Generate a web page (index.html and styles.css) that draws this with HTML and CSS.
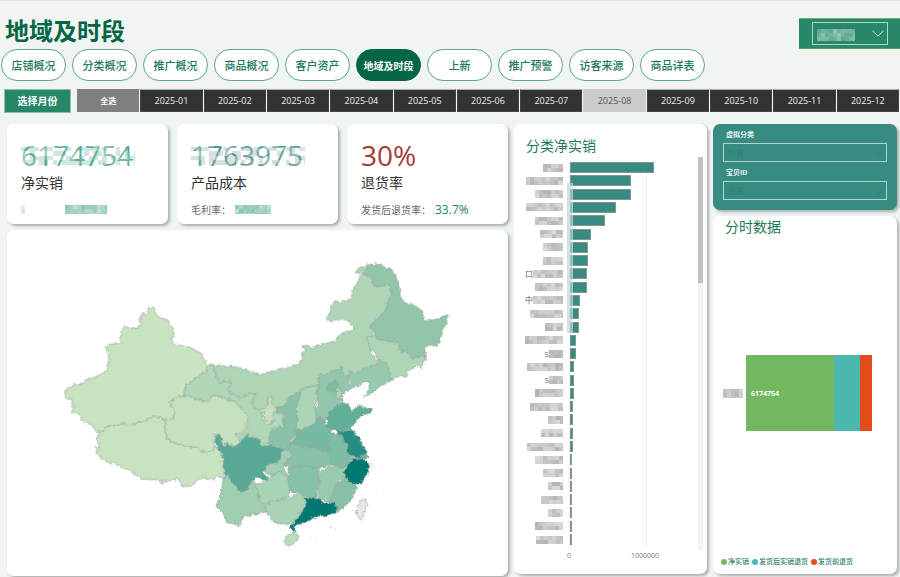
FILE: index.html
```html
<!DOCTYPE html>
<html lang="zh-CN">
<head>
<meta charset="utf-8">
<meta name="viewport" content="width=device-width, initial-scale=1">
<title>地域及时段</title>
<link rel="stylesheet" href="styles.css">
</head>
<body>
<header class="header">
  <h1 class="title">地域及时段</h1>
  <div class="shop">
    <div class="select-wrap shop-box">
      <select class="select" aria-label="店铺"><option></option></select>
      <span class="mask shop-mask" data-width="38" data-height="12" data-tone="light"></span>
      <svg class="chevron" viewBox="0 0 12 7"><path d="M.5 .7 6 6.2 11.5 .7"/></svg>
    </div>
  </div>
</header>

<nav class="tabs">
  <a class="tab" href="#">店铺概况</a>
  <a class="tab" href="#">分类概况</a>
  <a class="tab" href="#">推广概况</a>
  <a class="tab" href="#">商品概况</a>
  <a class="tab" href="#">客户资产</a>
  <a class="tab active" href="#">地域及时段</a>
  <a class="tab" href="#">上新</a>
  <a class="tab" href="#">推广预警</a>
  <a class="tab" href="#">访客来源</a>
  <a class="tab" href="#">商品详表</a>
</nav>

<section class="months">
  <div class="months-label">选择月份</div>
  <div class="months-list">
    <button class="month all">全选</button>
    <button class="month">2025-01</button>
    <button class="month">2025-02</button>
    <button class="month">2025-03</button>
    <button class="month">2025-04</button>
    <button class="month">2025-05</button>
    <button class="month">2025-06</button>
    <button class="month">2025-07</button>
    <button class="month selected">2025-08</button>
    <button class="month">2025-09</button>
    <button class="month">2025-10</button>
    <button class="month">2025-11</button>
    <button class="month">2025-12</button>
  </div>
</section>

<main class="board">
  <div class="left">
    <div class="kpis">
      <article class="card kpi">
        <div class="figure green">6174754<span class="mask figure-mask" data-width="114" data-height="26" data-tone="green"></span></div>
        <div class="kpi-name">净实销</div>
        <div class="kpi-note"><span class="mask" data-width="4" data-height="9" data-tone="pale"></span><span class="mask note-mask" data-width="42" data-height="9" data-tone="green"></span></div>
      </article>
      <article class="card kpi">
        <div class="figure teal">1763975<span class="mask figure-mask" data-width="114" data-height="26" data-tone="teal"></span></div>
        <div class="kpi-name">产品成本</div>
        <div class="kpi-note">毛利率：<span class="mask rate-mask" data-width="36" data-height="9" data-tone="green"></span></div>
      </article>
      <article class="card kpi">
        <div class="figure red">30%</div>
        <div class="kpi-name">退货率</div>
        <div class="kpi-note">发货后退货率：<strong class="rate">33.7%</strong></div>
      </article>
    </div>

    <section class="card map-card">
      <svg class="map" viewBox="180 780 1180 870" role="img" aria-label="各省净实销">
        <defs>
          <filter id="coast" x="-5%" y="-5%" width="110%" height="110%" color-interpolation-filters="sRGB">
            <feTurbulence type="fractalNoise" baseFrequency="0.09" numOctaves="2" seed="4" result="n"/>
            <feDisplacementMap in="SourceGraphic" in2="n" scale="15" xChannelSelector="R" yChannelSelector="G"/>
          </filter>
        </defs>
        <g class="provinces" filter="url(#coast)">
          <g transform="translate(600 1050)">
            <path fill="#add5b6" d="M37,45 80,48 120,52 145,62 180,73 205,70 235,58 270,52 300,40 312,22 305,10 315,0 308,-12 320,-14 345,-6 365,-18 400,-25 425,-48 465,-60 450,-85 430,-93 410,-90 385,-88 382,-97 395,-125 405,-147 420,-140 455,-155 460,-180 480,-215 482,-230 467,-232 475,-245 495,-252 510,-245 520,-220 530,-190 570,-198 580,-180 565,-160 560,-120 540,-100 515,-75 520,-45 500,-35 510,0 530,30 535,42 500,60 465,75 445,90 433,110 420,80 400,100 360,110 330,130 310,135 295,140 265,170 235,190 215,180 200,190 165,182 130,165 80,130 40,90Z"/>
            <path fill="#afd7b8" d="M23,47 37,45 45,60 50,80 60,98 90,93 95,105 80,118 95,130 120,145 150,130 168,132 155,160 165,175 185,183 190,205 200,225 220,215 215,195 228,185 250,200 250,232 215,235 210,255 200,283 185,292 165,280 150,255 140,253 132,268 115,265 105,250 130,250 143,225 145,205 120,170 100,155 60,140 35,140 20,158 -10,148 -52,138 -47,125 -42,104 -18,87 17,66Z"/>
          </g>
          <g transform="translate(150 750)">
            <path fill="#c8e3c0" d="M293,174 311,174 315,186 328,200 340,207 356,212 362,228 372,240 370,262 365,275 372,284 400,288 418,290 440,303 455,310 462,330 473,347 467,366 450,374 432,387 420,400 408,404 403,425 398,438 378,444 357,456 368,472 377,486 370,500 374,509 345,508 322,500 300,505 285,512 270,518 255,522 235,526 215,519 203,528 185,527 170,530 160,545 138,547 127,525 110,517 96,510 88,492 64,486 70,480 67,450 48,446 44,430 52,415 75,402 85,405 97,402 105,391 130,385 168,365 172,345 178,328 172,296 165,289 185,282 213,280 208,268 213,250 222,229 240,235 268,234 271,212 270,197 290,190Z"/>
            <path fill="#c8e3c0" d="M147,547 160,545 170,530 185,527 203,528 215,519 235,526 270,518 300,505 322,500 345,508 346,545 355,570 380,583 440,592 455,604 470,607 490,602 495,590 508,595 520,620 522,660 520,684 497,680 490,692 463,682 440,693 425,708 397,712 392,700 382,688 352,694 338,690 334,703 328,690 280,688 240,665 192,638 185,643 150,624 137,600 137,590 150,592 140,565Z"/>
            <path fill="#c5e1be" d="M357,456 378,444 398,438 420,440 440,448 470,458 480,452 487,436 510,440 550,455 570,470 588,488 595,508 585,535 576,548 556,550 560,565 580,570 568,575 562,588 525,582 515,570 507,555 495,557 492,587 495,595 490,602 470,607 455,604 440,592 380,583 355,570 346,545 345,508 374,509 370,500 377,486 368,472Z"/>
          </g>
          <g transform="translate(900 750)">
            <path fill="#91c6ab" d="M200,45 230,41 250,50 275,55 288,75 300,120 312,158 345,165 368,182 372,212 400,213 425,200 450,194 440,207 443,220 430,235 425,262 412,287 390,285 375,292 378,328 365,318 335,325 320,302 305,310 295,280 270,275 235,268 225,250 212,228 240,200 262,175 265,150 278,120 265,103 250,110 222,108 215,80 192,75 200,60Z"/>
            <path fill="#add5b6" d="M200,262 225,255 235,268 270,275 295,280 305,310 320,302 335,325 365,318 378,328 372,340 362,355 355,345 335,358 320,365 320,380 295,378 275,390 270,370 258,340 235,330 225,305 208,300 205,280Z"/>
            <path fill="#96c9ad" d="M150,360 165,375 190,358 235,342 235,330 258,340 270,370 275,392 245,408 225,425 200,437 188,442 205,420 207,400 190,396 175,410 162,412 155,400 148,385Z"/>
          </g>
          <g transform="translate(600 1050)">
            <path fill="#fff" stroke="none" d="M465,116 480,112 492,97 506,101 506,120 492,140 482,170 455,182 445,162 430,155 427,138 440,126Z"/>
            <path fill="#93c7ac" d="M360,70 380,75 400,65 425,50 433,75 445,80 450,100 462,112 440,125 425,135 430,155 415,160 395,180 378,205 350,203 345,180 355,160 352,145 348,130 358,110 355,90Z"/>
            <path fill="#7dbca4" d="M385,105 402,92 418,100 412,120 395,128 382,118Z"/>
            <path fill="#b2d9b9" d="M410,120 418,112 425,130 422,148 408,145Z"/>
            <path fill="#acd5b7" d="M300,125 320,112 355,105 358,112 348,130 352,145 345,170 348,200 340,225 305,240 287,242 292,210 288,175 297,150Z"/>
            <path fill="#88c1a7" d="M298,127 300,140 290,170 292,210 287,242 288,258 268,275 272,298 250,300 235,290 205,280 212,240 230,235 250,230 252,200 232,182 228,172 250,170 262,155 270,140 285,130Z"/>
            <path fill="#c5e1be" d="M215,135 220,150 215,165 230,170 228,185 215,195 220,215 205,223 195,210 192,190 180,178 200,175 205,145Z"/>
            <path fill="#9fceb0" d="M72,380 85,375 95,395 112,415 125,428 143,420 150,400 165,395 175,430 178,450 195,465 205,485 160,495 125,505 120,528 100,522 80,520 75,495 48,470 60,445 65,420Z"/>
            <path fill="#a2cfb2" d="M250,300 270,302 280,315 262,330 250,350 255,362 265,380 235,368 215,378 195,368 200,345 230,340Z"/>
            <path fill="#a9d3b5" d="M162,405 200,395 215,378 238,365 262,380 270,400 268,425 270,440 240,450 215,455 195,465 178,450 175,425Z"/>
            <path fill="#58a996" d="M43,260 52,253 65,265 70,290 80,280 90,287 110,288 118,278 130,265 145,253 150,262 175,265 185,290 215,285 250,300 240,325 230,340 200,345 190,370 208,388 190,392 170,380 150,400 143,420 125,428 112,415 95,395 85,375 75,382 70,320 48,285Z"/>
            <path fill="#a8d3b4" d="M195,470 215,455 240,450 270,445 300,430 312,440 315,460 305,490 285,517 265,524 225,520 205,495 200,480Z"/>
            <path fill="#89c2a8" d="M270,278 288,275 300,288 345,295 375,310 392,325 390,348 365,352 355,358 330,350 295,348 270,352 252,348 262,330 280,315 268,300Z"/>
            <path fill="#78b9a2" d="M287,243 320,235 345,220 350,203 378,208 372,235 395,240 402,255 385,275 392,295 378,310 345,295 300,288 270,278 288,262Z"/>
            <path fill="#61ae99" d="M378,205 395,178 418,162 440,158 450,168 455,185 475,168 500,175 515,178 515,188 490,195 470,215 450,235 430,245 400,240 372,232 385,215Z"/>
            <path fill="#7ebca5" d="M402,255 425,250 430,270 445,285 440,310 455,320 462,325 450,345 430,355 392,345 392,325 378,308 388,290 382,275 395,262Z"/>
            <path fill="#268e80" d="M400,238 430,247 452,235 465,248 480,265 490,290 503,305 502,320 480,327 455,318 440,310 445,285 430,270 425,255Z"/>
            <path fill="#9acbae" d="M360,365 392,350 430,355 437,365 440,385 420,390 405,415 395,440 390,458 360,450 355,425 358,395Z"/>
            <path fill="#87c1a7" d="M265,355 295,348 330,350 355,358 358,395 352,425 352,445 325,448 312,440 300,430 285,430 270,425 265,395Z"/>
            <path fill="#87c1a7" d="M440,385 450,395 472,402 465,430 450,455 430,475 410,485 408,460 390,455 400,430 412,400Z"/>
            <path fill="#007a70" d="M462,325 488,330 500,332 510,345 500,380 485,400 465,402 448,395 432,368 445,345Z"/>
            <path fill="#6bb39d" d="M480,318 500,312 505,325 488,330Z"/>
            <path fill="#007a70" d="M315,448 335,443 350,447 362,445 365,458 385,460 405,457 412,475 405,490 380,497 350,500 320,515 295,525 282,530 287,545 278,548 272,530 285,515 305,490 318,465Z"/>
            <path fill="#badcba" d="M252,570 265,555 290,550 298,560 285,580 268,590 255,582Z"/>
            <path fill="#e6e6e6" d="M485,452 498,446 503,460 490,500 483,512 470,495 470,475Z"/>
            <path d="M390,532h3M405,540h3M335,563h2M349,569h2M532,436h3M550,433h3M457,482h2M494,511h2M512,335h5M512,345h5M508,138h4M522,139h3"/>
          </g>
        </g>
      </svg>
    </section>
  </div>

  <section class="card categories">
    <h2 class="card-title">分类净实销</h2>
    <div class="chart-body">
      <div class="chart">
        <div class="rows" id="rows"></div>
        <div class="smear"></div>
      </div>
      <div class="scroll"><div class="thumb"></div></div>
    </div>
    <div class="axis"><span class="tick">0</span><span class="tick">1000000</span></div>
  </section>

  <div class="right">
    <section class="card filters">
      <label class="filter-label" for="category">虚拟分类</label>
      <div class="select-wrap">
        <select class="select" id="category"><option>所有</option></select>
        <svg class="chevron dim" viewBox="0 0 12 7"><path d="M.5 .7 6 6.2 11.5 .7"/></svg>
      </div>
      <label class="filter-label" for="item">宝贝ID</label>
      <div class="select-wrap">
        <select class="select" id="item"><option>所有</option></select>
        <svg class="chevron dim" viewBox="0 0 12 7"><path d="M.5 .7 6 6.2 11.5 .7"/></svg>
      </div>
    </section>
    <section class="card hours">
      <h2 class="card-title">分时数据</h2>
      <div class="stack-area">
        <span class="mask" data-width="20" data-height="9" data-tone="gray"></span>
        <div class="stack">
          <div class="seg net"><span class="seg-value">6174754</span></div>
          <div class="seg after"></div>
          <div class="seg before"></div>
        </div>
      </div>
      <ul class="legend">
        <li class="key net-key">净实销</li>
        <li class="key after-key">发货后实销退货</li>
        <li class="key before-key">发货前退货</li>
      </ul>
    </section>
  </div>
</main>
<script src="script.js"></script>
</body>
</html>
```
FILE: styles.css
```css
* { box-sizing: border-box; }

body {
  margin: 0;
  min-height: 100vh;
  display: flex;
  flex-direction: column;
  background: #f0f5f4;
  border-top: 1px solid #dfe4e3;
  color: #333;
  font-family: "Open Sans", "Noto Sans CJK SC", sans-serif;
  overflow-x: hidden;
}

h1, h2, ul { margin: 0; padding: 0; }

.header {
  display: flex;
  justify-content: space-between;
  align-items: flex-end;
  height: 48px;
  padding-left: 5px;
}

.title {
  font-size: 24px;
  line-height: 36px;
  font-weight: 700;
  color: #046644;
}

.shop {
  width: 101px;
  height: 31px;
  padding: 3px 12px 4px 13px;
  background: #278769;
  border-top: 1px solid #7fa873;
  border-bottom: 1px solid #5f9a63;
}

.select-wrap { position: relative; height: 19px; }
.shop-box { height: 23px; }
.shop-mask { position: absolute; left: 5px; top: 7px; }

.select {
  display: block;
  appearance: none;
  width: 100%;
  height: 100%;
  padding: 0 4px;
  border: 1px solid #b4d5cd;
  border-radius: 0;
  background: transparent;
  color: #2a8170;
  font: 8px "Noto Sans CJK SC", sans-serif;
}

.chevron {
  position: absolute;
  right: 4px;
  top: 8px;
  width: 12px;
  height: 7px;
  fill: none;
  stroke: #e4f2ed;
  pointer-events: none;
}
.chevron.dim { width: 8px; height: 5px; stroke: #2a8170; }

.tabs { display: flex; gap: 6px; padding: 0 1px; }

.tab {
  flex: 0 1 65px;
  height: 32px;
  display: flex;
  align-items: center;
  justify-content: center;
  border: 1px solid #5ea68d;
  border-radius: 16px;
  background: #fff;
  color: #1c7a57;
  font-size: 11px;
  font-weight: 500;
  text-decoration: none;
  white-space: nowrap;
}
.tab.active {
  background: #046644;
  border-color: #046644;
  color: #fff;
  font-size: 10px;
  font-weight: 700;
}

.months { display: flex; gap: 6px; padding: 8px 1px 0 4px; }

.months-label {
  flex: 0 0 67px;
  height: 24px;
  line-height: 22px;
  text-align: center;
  border: 1px solid #8cc0ad;
  background: #278769;
  color: #fff;
  font-size: 10px;
  font-weight: 700;
}

.months-list {
  flex: 1;
  display: grid;
  grid-template-columns: repeat(13, 1fr);
  gap: 1px;
  height: 23px;
}

.month {
  padding: 0;
  border: 1px solid #3f4342;
  border-top-color: #a9b2af;
  background: #333;
  color: #eee;
  font-family: inherit;
  font-size: 9px;
  text-align: center;
}
.month.all { background: #808080; border-color: #808080; color: #fff; font-size: 8px; font-weight: 700; }
.month.selected { background: #ccc; border-color: #ccc; color: #555; }

.board {
  flex: 1;
  display: grid;
  grid-template-columns: 501fr 193fr 184fr;
  padding: 11px 3px 1px 7px;
  column-gap: 6px;
}

.card {
  border-radius: 7px;
  background: #fff;
  box-shadow: 2px 2px 3px #a9aeac;
}

.left { display: flex; flex-direction: column; gap: 6px; }
.kpis { display: grid; grid-template-columns: repeat(3, 1fr); gap: 9px; }
.kpi { height: 100px; padding: 12px 14px 8px; }

.figure {
  position: relative;
  font-size: 28px;
  line-height: 38px;
}
.figure.green { color: #239070; }
.figure.teal { color: #22796b; }
.figure.red { color: #a63c36; }
.figure-mask { position: absolute; left: 0; top: 6px; }

.kpi-name { font-size: 14px; line-height: 18px; }

.kpi-note {
  display: flex;
  align-items: center;
  height: 18px;
  margin-top: 8px;
  font-size: 10px;
  color: #666;
  white-space: nowrap;
}
.note-mask { margin-left: 40px; }
.rate-mask { margin-left: 4px; }
.rate { font-size: 12px; font-weight: 400; color: #25805e; margin-left: 4px; }

.mask { display: inline-block; line-height: 0; }
.mask svg { display: block; }

.map-card { flex: 1; display: flex; padding: 30px 55px 20px 53px; }
.map { width: 100%; height: auto; align-self: flex-start; }
.provinces { stroke: #929f99; stroke-width: 2; stroke-linejoin: round; }

.categories { display: flex; flex-direction: column; padding: 11px 4px 12px 0; margin-bottom: 2px; }

.card-title {
  padding-left: 12px;
  font-size: 14px;
  line-height: 22px;
  font-weight: 400;
  color: #1c7a57;
}

.chart-body { flex: 1; display: flex; }
.chart { position: relative; flex: 1; display: flex; padding: 4px 0; }
.rows { flex: 1; display: flex; flex-direction: column; }

.row { flex: 1; display: grid; grid-template-columns: 49px 1fr; column-gap: 6px; }

.row-label {
  display: flex;
  align-items: center;
  justify-content: flex-end;
  font-size: 8px;
  line-height: 8px;
  color: #666;
}

.row-plot {
  display: flex;
  align-items: center;
  border-left: 1px solid #eee;
  background: linear-gradient(#eee, #eee) 60% 0 / 1px 100% no-repeat;
}
.bar { height: 11px; background: #378b81; border: 1px solid #839690; }

.smear {
  position: absolute;
  left: 53px;
  top: 26px;
  width: 6px;
  height: 150px;
  background: linear-gradient(90deg, #9fc8c088, #d0e4dfaa);
}

.scroll { flex: 0 0 5px; background: #f3f3f3; }
.thumb { height: 32%; background: #c2c2c2; }

.axis {
  display: grid;
  grid-template-columns: 1fr 1fr;
  padding: 0 20px 0 17px;
  font-size: 7px;
  line-height: 12px;
  color: #777;
}
.tick { text-align: center; }

.right { display: flex; flex-direction: column; gap: 6px; margin-bottom: 2px; }

.filters { padding: 4px 10px 10px; background: #378b81; }
.filter-label {
  display: block;
  padding-left: 3px;
  font-size: 7px;
  line-height: 13px;
  height: 15px;
  font-weight: 700;
  color: #e8f4f1;
}
.filters .select-wrap + .filter-label { margin-top: 4px; }

.hours { flex: 1; display: flex; flex-direction: column; }

.stack-area {
  flex: 1;
  display: flex;
  align-items: center;
  gap: 3px;
  padding: 0 25px 8px 10px;
}
.stack { flex: 1; display: grid; grid-template-columns: 88fr 26fr 12fr; height: 76px; }
.seg { display: flex; align-items: center; }
.seg-value { padding-left: 5px; font-size: 7px; font-weight: 700; color: #fff; }
.net { background: #73b761; }
.after { background: #4ab8ae; }
.before { background: #e64c19; }

.legend {
  display: flex;
  gap: 3px;
  padding: 0 8px 6px;
  list-style: none;
  font-size: 7px;
  line-height: 12px;
  font-weight: 500;
  color: #268466;
  white-space: nowrap;
}
.key { display: flex; align-items: center; gap: 1px; }
.key::before { content: ""; width: 6px; height: 6px; border-radius: 50%; }
.net-key::before { background: #73b761; }
.after-key::before { background: #4ab8ae; }
.before-key::before { background: #e64c19; }
```
FILE: script.js
```js
// Category sales in thousands, with the masked label's width and its readable part.
const categories = [
  [1105, 20], [804, 37], [796, 28], [602, 37], [452, 28], [275, 23], [229, 20],
  [229, 20], [216, 30, "口"], [216, 28], [133, 30, "中"], [120, 33], [112, 18],
  [75, 38], [75, 14, "S"], [56, 36], [48, 14, "S"], [48, 28], [43, 33],
  [35, 15], [35, 22], [35, 36], [30, 28], [30, 20], [30, 15], [30, 22],
  [22, 15], [22, 28], [20, 27]
];
const axisMax = 1677;

const tones = {
  green: [62, 158, 130],
  teal: [92, 138, 132],
  gray: [130, 130, 130],
  pale: [200, 200, 200],
  light: [225, 242, 236]
};

let seed = 11;
function random() {
  seed = (seed * 16807) % 2147483647;
  return seed / 2147483647;
}

function mosaic(width, height, tone) {
  const large = height > 20;
  const cell = large ? 4.5 : 4;
  const rgb = tones[tone].join();
  let cells = "";
  for (let y = 0; y < height; y += cell) {
    for (let x = 0; x < width; x += cell) {
      const w = Math.min(cell, width - x);
      const h = Math.min(cell, height - y);
      const alpha = large ? 0.2 + random() * 0.4 : 0.3 + random() * 0.3;
      const color = large ? "255,255,255" : rgb;
      cells += `<rect x="${x}" y="${y}" width="${w}" height="${h}" fill="rgba(${color},${alpha.toFixed(2)})"/>`;
      if (large && y > 3 && y < 22 && random() > 0.5) {
        cells += `<rect x="${x}" y="${y}" width="${w}" height="${h}" fill="rgba(${rgb},.25)"/>`;
      }
    }
  }
  return `<svg width="${width}" height="${height}" shape-rendering="crispEdges" aria-hidden="true">${cells}</svg>`;
}

document.getElementById("rows").innerHTML = categories.map(([value, width, text]) =>
  `<div class="row"><div class="row-label">${text || ""}<span class="mask" data-width="${width}" data-height="8" data-tone="gray"></span></div>` +
  `<div class="row-plot"><div class="bar" style="width:${(value / axisMax * 100).toFixed(1)}%"></div></div></div>`
).join("");

document.querySelectorAll(".mask").forEach((el) => {
  el.innerHTML = mosaic(+el.dataset.width, +el.dataset.height, el.dataset.tone);
});
```
